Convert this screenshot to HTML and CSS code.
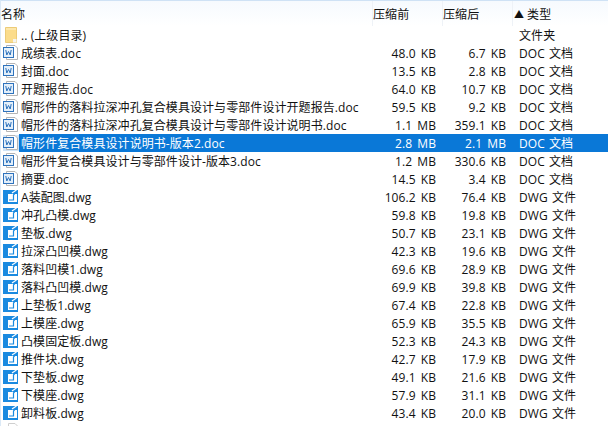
FILE: index.html
```html
<!DOCTYPE html>
<html lang="zh">
<head>
<meta charset="utf-8">
<title>文件列表</title>
<link rel="stylesheet" href="styles.css">
</head>
<body>
<svg class="defs" width="0" height="0">
<symbol id="doc" viewBox="0 0 16 16">
<path d="M3.500 .5H12L14.500 3V14.500H3.500Z" fill="#fff" stroke="#b5b5b5"/>
<rect x=".5" y="2.500" width="10" height="10" fill="#e3effa" stroke="#2f73bd"/>
<path d="M2.800 5 3.800 10 5.500 6.500 7.200 10 8.200 5" fill="none" stroke="#2f73bd"/>
</symbol>
<symbol id="dwg" viewBox="0 0 16 14">
<rect x="0" y="0" width="15" height="14" fill="#1a8ae0"/>
<rect x="5" y="4" width="9" height="8" fill="#fff"/>
<path d="M6 10H10.500V5L13 2" fill="none" stroke="#1a8ae0" stroke-width="1.200"/>
<path d="M9 3 13.500 0" stroke="#fff" stroke-width="1.200"/>
</symbol>
<symbol id="folder" viewBox="0 0 12 16">
<path d="M.5 .5H11.500V15.500H.5Z" fill="#fbdc8b" stroke="#eccb78"/>
<path d="M1 1H11V3H1Z" fill="#fde7ab"/>
<path d="M8 12H11.500V15.500H8Z" fill="#f4f4f0"/>
</symbol>
<symbol id="blank" viewBox="0 0 16 16">
<path d="M5.500 .5H12L14.500 3V15.500H5.500Z" fill="#fff" stroke="#cfcfcf"/>
</symbol>
</svg>
<div class="list">
<div class="head">
<div class="hname">名称</div>
<div class="hcol">压缩前</div>
<div class="hcol">压缩后</div>
<div class="hcol htype"><span class="arrow">▲</span>类型</div>
</div>
<div class="rows">
<div class="row"><svg class="ic-folder"><use href="#folder"/></svg><span class="name">.. (上级目录)</span><span></span><span></span><span class="type">文件夹</span></div>
<div class="row"><svg class="ic"><use href="#doc"/></svg><span class="name">成绩表.doc</span><span class="num">48.0 KB</span><span class="num">6.7 KB</span><span class="type">DOC 文档</span></div>
<div class="row"><svg class="ic"><use href="#doc"/></svg><span class="name">封面.doc</span><span class="num">13.5 KB</span><span class="num">2.8 KB</span><span class="type">DOC 文档</span></div>
<div class="row"><svg class="ic"><use href="#doc"/></svg><span class="name">开题报告.doc</span><span class="num">64.0 KB</span><span class="num">10.7 KB</span><span class="type">DOC 文档</span></div>
<div class="row"><svg class="ic"><use href="#doc"/></svg><span class="name">帽形件的落料拉深冲孔复合模具设计与零部件设计开题报告.doc</span><span class="num">59.5 KB</span><span class="num">9.2 KB</span><span class="type">DOC 文档</span></div>
<div class="row"><svg class="ic"><use href="#doc"/></svg><span class="name">帽形件的落料拉深冲孔复合模具设计与零部件设计说明书.doc</span><span class="num">1.1 MB</span><span class="num">359.1 KB</span><span class="type">DOC 文档</span></div>
<div class="row selected"><svg class="ic"><use href="#doc"/></svg><span class="name">帽形件复合模具设计说明书-版本2.doc</span><span class="num">2.8 MB</span><span class="num">2.1 MB</span><span class="type">DOC 文档</span></div>
<div class="row"><svg class="ic"><use href="#doc"/></svg><span class="name">帽形件复合模具设计与零部件设计-版本3.doc</span><span class="num">1.2 MB</span><span class="num">330.6 KB</span><span class="type">DOC 文档</span></div>
<div class="row"><svg class="ic"><use href="#doc"/></svg><span class="name">摘要.doc</span><span class="num">14.5 KB</span><span class="num">3.4 KB</span><span class="type">DOC 文档</span></div>
<div class="row"><svg class="ic-dwg"><use href="#dwg"/></svg><span class="name">A装配图.dwg</span><span class="num">106.2 KB</span><span class="num">76.4 KB</span><span class="type">DWG 文件</span></div>
<div class="row"><svg class="ic-dwg"><use href="#dwg"/></svg><span class="name">冲孔凸模.dwg</span><span class="num">59.8 KB</span><span class="num">19.8 KB</span><span class="type">DWG 文件</span></div>
<div class="row"><svg class="ic-dwg"><use href="#dwg"/></svg><span class="name">垫板.dwg</span><span class="num">50.7 KB</span><span class="num">23.1 KB</span><span class="type">DWG 文件</span></div>
<div class="row"><svg class="ic-dwg"><use href="#dwg"/></svg><span class="name">拉深凸凹模.dwg</span><span class="num">42.3 KB</span><span class="num">19.6 KB</span><span class="type">DWG 文件</span></div>
<div class="row"><svg class="ic-dwg"><use href="#dwg"/></svg><span class="name">落料凹模1.dwg</span><span class="num">69.6 KB</span><span class="num">28.9 KB</span><span class="type">DWG 文件</span></div>
<div class="row"><svg class="ic-dwg"><use href="#dwg"/></svg><span class="name">落料凸凹模.dwg</span><span class="num">69.9 KB</span><span class="num">39.8 KB</span><span class="type">DWG 文件</span></div>
<div class="row"><svg class="ic-dwg"><use href="#dwg"/></svg><span class="name">上垫板1.dwg</span><span class="num">67.4 KB</span><span class="num">22.8 KB</span><span class="type">DWG 文件</span></div>
<div class="row"><svg class="ic-dwg"><use href="#dwg"/></svg><span class="name">上模座.dwg</span><span class="num">65.9 KB</span><span class="num">35.5 KB</span><span class="type">DWG 文件</span></div>
<div class="row"><svg class="ic-dwg"><use href="#dwg"/></svg><span class="name">凸模固定板.dwg</span><span class="num">52.3 KB</span><span class="num">24.3 KB</span><span class="type">DWG 文件</span></div>
<div class="row"><svg class="ic-dwg"><use href="#dwg"/></svg><span class="name">推件块.dwg</span><span class="num">42.7 KB</span><span class="num">17.9 KB</span><span class="type">DWG 文件</span></div>
<div class="row"><svg class="ic-dwg"><use href="#dwg"/></svg><span class="name">下垫板.dwg</span><span class="num">49.1 KB</span><span class="num">21.6 KB</span><span class="type">DWG 文件</span></div>
<div class="row"><svg class="ic-dwg"><use href="#dwg"/></svg><span class="name">下模座.dwg</span><span class="num">57.9 KB</span><span class="num">31.1 KB</span><span class="type">DWG 文件</span></div>
<div class="row"><svg class="ic-dwg"><use href="#dwg"/></svg><span class="name">卸料板.dwg</span><span class="num">43.4 KB</span><span class="num">20.0 KB</span><span class="type">DWG 文件</span></div>
<div class="row"><svg class="ic"><use href="#blank"/></svg></div>
</div>
</div>
</body>
</html>
```
FILE: styles.css
```css
html, body {
  margin: 0;
  padding: 0;
  height: 100%;
  overflow: hidden;
  background: #fff;
}
.defs {
  display: block;
  height: 0;
}
.list {
  font-family: "Open Sans", "Noto Sans CJK SC", sans-serif;
  font-size: 12px;
  letter-spacing: .07px;
  color: #111;
  border-left: 1px solid #dbe9f6;
  border-top: 1px solid #cfe2f5;
}
.head {
  display: grid;
  grid-template-columns: 371px 70px 70px 1fr;
  height: 25px;
  align-items: center;
  background: linear-gradient(#f6fafe, #fff);
}
.hcol {
  height: 100%;
  display: flex;
  align-items: center;
  border-left: 1px solid #eef2f7;
}
.htype {
  padding-left: 1px;
}
.arrow {
  font-size: 10px;
  margin-right: 3px;
}
.rows {
  display: flex;
  flex-direction: column;
}
.row {
  display: grid;
  grid-template-columns: 19px 352px 64px 70px 1fr;
  grid-template-rows: 18px;
  height: 18px;
  line-height: 20px;
  align-items: start;
  white-space: nowrap;
}
.ic {
  width: 16px;
  height: 16px;
  display: block;
  margin: 1px 0 0 2px;
}
.ic-dwg {
  width: 16px;
  height: 14px;
  display: block;
  margin: 2px 0 0 2px;
}
.ic-folder {
  width: 12px;
  height: 16px;
  margin: 1px 0 0 4px;
  display: block;
}
.name {
  padding-left: 1px;
  justify-self: start;
}
.num {
  text-align: right;
  word-spacing: 2px;
}
.type {
  padding-left: 13px;
  word-spacing: 1px;
}
.selected {
  background: linear-gradient(to right, #fff 18px, #0a78d7 18px);
  color: #fff;
}
.selected .ic {
  background: #cfe3f6;
}
```
